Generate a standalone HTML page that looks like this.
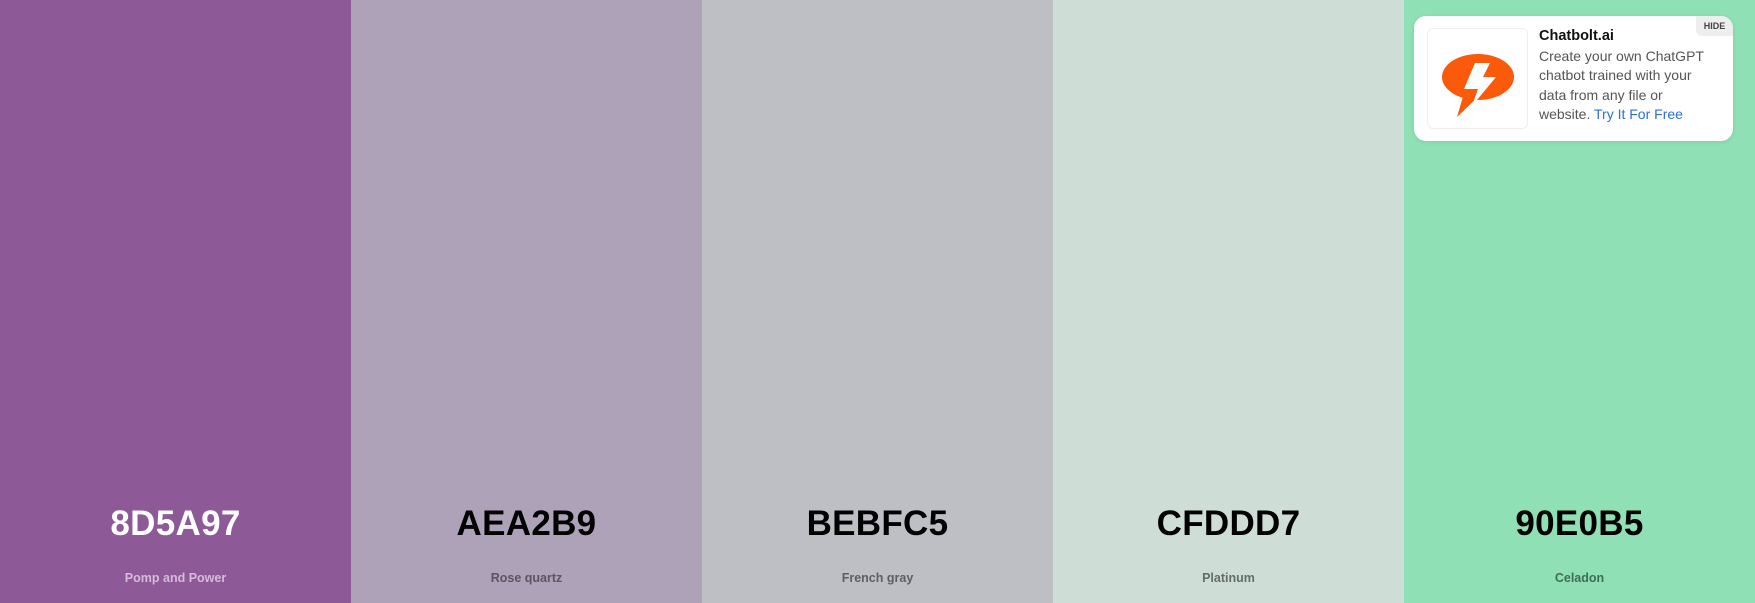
<!DOCTYPE html>
<html><head><style>
body{margin:0;width:1755px;height:603px;overflow:hidden;font-family:"Liberation Sans",sans-serif;display:flex}
.c{width:351px;height:603px;position:relative}
.h{position:absolute;top:504px;width:100%;text-align:center;font-size:35px;font-weight:bold;letter-spacing:0.3px}
.n{position:absolute;top:571px;width:100%;text-align:center;font-size:12.5px;font-weight:bold}
.card{position:absolute;left:1414px;top:16px;width:319px;height:125px;background:#fff;border-radius:12px;box-shadow:0 1px 4px rgba(0,0,0,.1)}
.logo{position:absolute;left:13px;top:12px;width:99px;height:99px;border:1px solid #eee;border-radius:6px}
.t{position:absolute;left:125px;top:10px;font-size:14px;line-height:19.5px;color:#555;width:176px}
.hide{position:absolute;right:0;top:0;width:37px;height:20px;background:#eee;border-radius:0 12px 0 6px;font-size:9px;font-weight:bold;color:#444;text-align:center;line-height:20px}
</style></head><body>
<div class="c" style="background:#8D5A97"><div class="h" style="color:#fff">8D5A97</div><div class="n" style="color:#d5bcd9">Pomp and Power</div></div>
<div class="c" style="background:#AEA2B9"><div class="h" style="color:#000">AEA2B9</div><div class="n" style="color:#5c5463">Rose quartz</div></div>
<div class="c" style="background:#BEBFC5"><div class="h" style="color:#000">BEBFC5</div><div class="n" style="color:#5e5f64">French gray</div></div>
<div class="c" style="background:#CFDDD7"><div class="h" style="color:#000">CFDDD7</div><div class="n" style="color:#646e69">Platinum</div></div>
<div class="c" style="background:#90E0B5"><div class="h" style="color:#000">90E0B5</div><div class="n" style="color:#3f6e55">Celadon</div></div>
<div class="card">
<div class="logo"><svg width="99" height="99" viewBox="0 0 99 99">
<ellipse cx="50" cy="48" rx="36" ry="23" fill="#fa5a0a"/>
<path d="M36 64 L29 88 L50 68 Z" fill="#fa5a0a"/>
<path d="M47 34 L62 34 L55 48 L68 48 L44 77 L50 60 L36 60 Z" fill="#fff"/>
</svg></div>
<div class="t"><b style="color:#111;font-size:14.5px">Chatbolt.ai</b><br>Create your own ChatGPT chatbot trained with your data from any file or website. <span style="color:#2a6fdb">Try It For Free</span></div>
<div class="hide">HIDE</div>
</div>
</body></html>
